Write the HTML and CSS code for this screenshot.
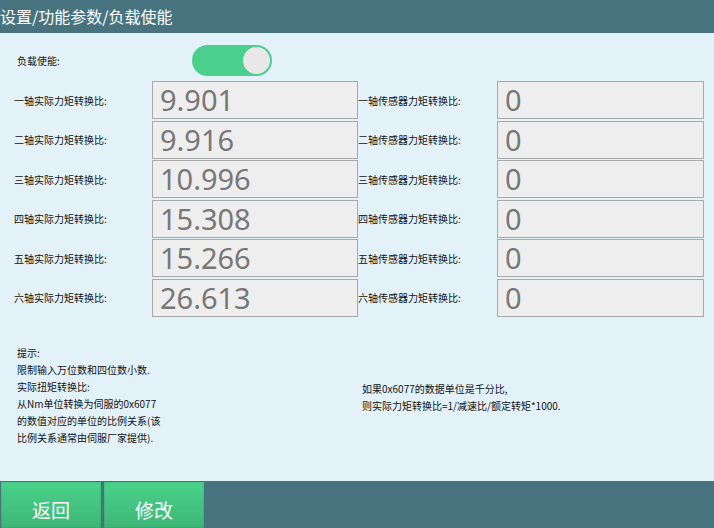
FILE: index.html
```html
<!DOCTYPE html>
<html lang="zh-CN">
<head>
  <meta charset="UTF-8">
  <title>负载使能</title>
  <link rel="stylesheet" href="styles.css">
</head>
<body>
  <header class="title-bar">设置/功能参数/负载使能</header>
  <main class="content">
    <!-- Enable switch -->
    <div class="enable-row">
      <span class="label">负载使能:</span>
      <div class="switch on"><div class="knob"></div></div>
    </div>

    <!-- Ratio table -->
    <div class="ratio-grid">
      <div class="label">一轴实际力矩转换比:</div><div class="value">9.901</div>
      <div class="label">一轴传感器力矩转换比:</div><div class="value">0</div>
      <div class="label">二轴实际力矩转换比:</div><div class="value">9.916</div>
      <div class="label">二轴传感器力矩转换比:</div><div class="value">0</div>
      <div class="label">三轴实际力矩转换比:</div><div class="value">10.996</div>
      <div class="label">三轴传感器力矩转换比:</div><div class="value">0</div>
      <div class="label">四轴实际力矩转换比:</div><div class="value">15.308</div>
      <div class="label">四轴传感器力矩转换比:</div><div class="value">0</div>
      <div class="label">五轴实际力矩转换比:</div><div class="value">15.266</div>
      <div class="label">五轴传感器力矩转换比:</div><div class="value">0</div>
      <div class="label">六轴实际力矩转换比:</div><div class="value">26.613</div>
      <div class="label">六轴传感器力矩转换比:</div><div class="value">0</div>
    </div>

    <!-- Hints -->
    <div class="hints">
      <div class="hint-left">
        提示:<br>
        限制输入万位数和四位数小数.<br>
        实际扭矩转换比:<br>
        从Nm单位转换为伺服的0x6077<br>
        的数值对应的单位的比例关系(该<br>
        比例关系通常由伺服厂家提供).
      </div>
      <div class="hint-right">
        如果0x6077的数据单位是千分比,<br>
        则实际力矩转换比=1/减速比/额定转矩*1000.
      </div>
    </div>
  </main>
  <footer class="bottom-bar">
    <button class="btn">返回</button>
    <button class="btn">修改</button>
  </footer>
</body>
</html>
```

FILE: styles.css
```css
/* Reset & base */
* { margin: 0; padding: 0; box-sizing: border-box; }
body { width: 714px; height: 528px; overflow: hidden; background: #e3f2f8; color: #111; font-family: "Noto Sans", "Noto Sans CJK SC", sans-serif; display: flex; flex-direction: column; }

/* Header */
.title-bar { height: 33px; background: #47737f; color: #fff; font-size: 16px; line-height: 33px; font-family: "Noto Sans CJK SC", sans-serif; }

/* Content */
.content { flex: 1; padding-top: 12px; }
.label { font-size: 10px; font-family: "Noto Sans CJK SC", sans-serif; color: #111; }

.enable-row { display: flex; align-items: center; height: 31px; }
.enable-row .label { width: 192px; padding-left: 17px; }
.switch { width: 80px; height: 31px; border-radius: 16px; background: #4bcf8c; position: relative; }
.switch .knob { position: absolute; right: 2px; top: 2px; width: 27px; height: 27px; border-radius: 50%; background: #e8e8e8; }

.ratio-grid { margin-top: 5px; display: grid; grid-template-columns: 152px 206px 139px 207px; grid-auto-rows: 38px; row-gap: 1.6px; }
.ratio-grid .label { display: flex; align-items: center; padding-left: 14px; }
.ratio-grid .label:nth-child(4n+3) { padding-left: 0; }
.value { border: 1px solid #a9a9a9; background: #eeeeee; color: #777; font-size: 29px; line-height: 36px; padding-left: 7px; font-family: "Noto Sans", sans-serif; }

.hints { display: flex; margin-top: 27px; }
.hint-left, .hint-right { font-size: 10px; line-height: 17px; font-family: "Noto Sans CJK SC", sans-serif; }
.hint-left { width: 345px; padding-left: 17px; }
.hint-right { padding-top: 36px; padding-left: 17px; }

/* Footer */
.bottom-bar { height: 47px; background: #47737f; display: flex; gap: 3px; padding: 1px 0 0 1px; }
.btn { width: 100px; height: 46px; border: none; background: linear-gradient(#49d28a, #3eb676); color: #fff; font-size: 19px; font-family: "Noto Sans CJK SC", sans-serif; padding-top: 8px; box-shadow: inset 0 0 2px rgba(0,0,0,0.2); }
```
